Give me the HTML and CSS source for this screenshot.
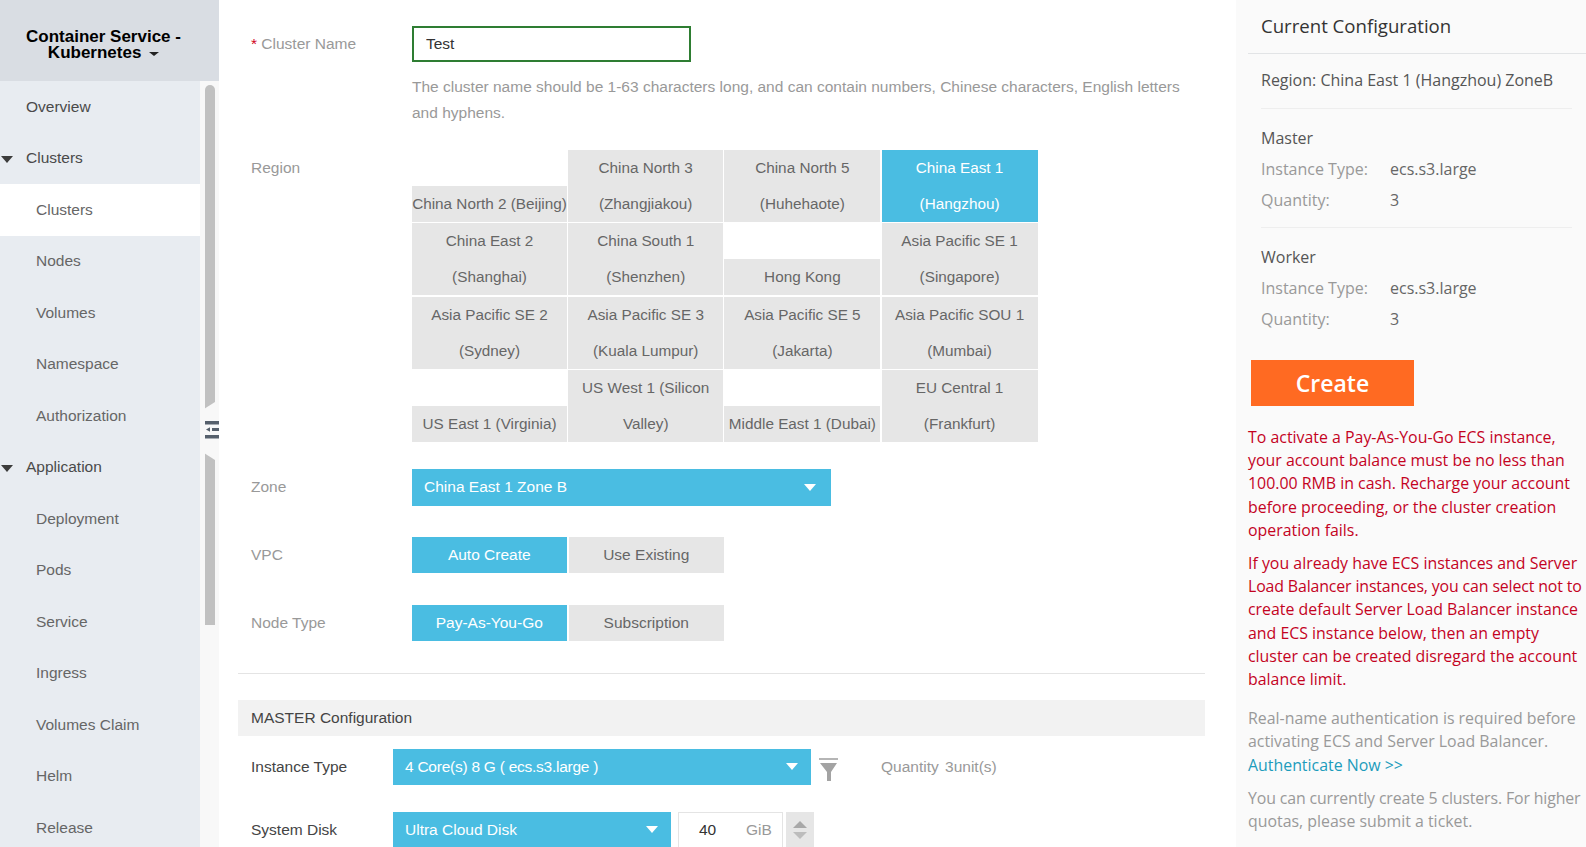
FILE: index.html
```html
<!DOCTYPE html>
<html lang="en">
<head>
<meta charset="utf-8">
<title>Container Service - Kubernetes</title>
<link rel="stylesheet" href="styles.css">
</head>
<body>
<div class="page">
  <aside class="sidebar">
    <div class="brand"><span>Container Service -<br>Kubernetes <i class="brand-caret"></i></span></div>
    <div class="side-body">
      <nav class="menu">
        <a class="item">Overview</a>
        <a class="item group"><i class="tri"></i>Clusters</a>
        <a class="item sub active">Clusters</a>
        <a class="item sub">Nodes</a>
        <a class="item sub">Volumes</a>
        <a class="item sub">Namespace</a>
        <a class="item sub">Authorization</a>
        <a class="item group"><i class="tri"></i>Application</a>
        <a class="item sub">Deployment</a>
        <a class="item sub">Pods</a>
        <a class="item sub">Service</a>
        <a class="item sub">Ingress</a>
        <a class="item sub">Volumes Claim</a>
        <a class="item sub">Helm</a>
        <a class="item sub">Release</a>
      </nav>
      <div class="track"><div class="thumb"></div></div>
    </div>
    <svg class="handle" width="18" height="62" viewBox="0 0 18 62">
      <path d="M3 9 L14 2 H18 V60 H14 L3 53 L2 50 V12 Z" fill="#f8f8f8"/>
      <path d="M4 21h14v3.500H4z M11 28h7v3h-7z M4 35h14v3.500H4z" fill="#56606c"/>
      <path d="M5 29.500l4-2.300v4.600z" fill="#56606c"/>
    </svg>
  </aside>

  <main class="main">
    <div class="form-row name-row">
      <label class="label"><b class="req">*</b> Cluster Name</label>
      <input class="name-input" value="Test">
    </div>
    <p class="help">The cluster name should be 1-63 characters long, and can contain numbers, Chinese characters, English letters<br>and hyphens.</p>

    <div class="form-row region-row">
      <label class="label region-label">Region</label>
      <div class="regions">
        <div class="cell">China North 2 (Beijing)</div>
        <div class="cell">China North 3<br>(Zhangjiakou)</div>
        <div class="cell">China North 5<br>(Huhehaote)</div>
        <div class="cell on">China East 1<br>(Hangzhou)</div>
        <div class="cell">China East 2<br>(Shanghai)</div>
        <div class="cell">China South 1<br>(Shenzhen)</div>
        <div class="cell">Hong Kong</div>
        <div class="cell">Asia Pacific SE 1<br>(Singapore)</div>
        <div class="cell">Asia Pacific SE 2<br>(Sydney)</div>
        <div class="cell">Asia Pacific SE 3<br>(Kuala Lumpur)</div>
        <div class="cell">Asia Pacific SE 5<br>(Jakarta)</div>
        <div class="cell">Asia Pacific SOU 1<br>(Mumbai)</div>
        <div class="cell">US East 1 (Virginia)</div>
        <div class="cell">US West 1 (Silicon<br>Valley)</div>
        <div class="cell">Middle East 1 (Dubai)</div>
        <div class="cell">EU Central 1<br>(Frankfurt)</div>
      </div>
    </div>

    <div class="form-row zone-row">
      <label class="label">Zone</label>
      <div class="select zone-select"><span>China East 1 Zone B</span><i class="caret"></i></div>
    </div>

    <div class="form-row toggle-row">
      <label class="label">VPC</label>
      <div class="toggle"><span class="opt on">Auto Create</span><span class="opt">Use Existing</span></div>
    </div>

    <div class="form-row toggle-row">
      <label class="label">Node Type</label>
      <div class="toggle"><span class="opt on">Pay-As-You-Go</span><span class="opt">Subscription</span></div>
    </div>

    <hr class="divider">

    <div class="section-bar">MASTER Configuration</div>

    <div class="cfg-row first">
      <label class="cfg-label">Instance Type</label>
      <div class="select inst-select"><span>4 Core(s) 8 G ( ecs.s3.large )</span><i class="caret"></i></div>
      <svg class="filter" width="19" height="24" viewBox="0 0 19 24">
        <path d="M0 1h19v2H0z" fill="#b5b5b5"/>
        <path d="M1 6h17l-6 9v9H8v-9z" fill="#a3a3a3"/>
      </svg>
      <span class="quantity">Quantity <span class="qty-num">3unit(s)</span></span>
    </div>

    <div class="cfg-row">
      <label class="cfg-label">System Disk</label>
      <div class="select disk-select"><span>Ultra Cloud Disk</span><i class="caret"></i></div>
      <div class="num-box"><span class="num">40</span><span class="unit">GiB</span></div>
      <div class="stepper"><i class="up"></i><i class="down"></i></div>
    </div>
  </main>

  <section class="panel">
    <h2 class="panel-title">Current Configuration</h2>
    <div class="panel-block region-line">Region: China East 1 (Hangzhou) ZoneB</div>
    <div class="panel-block spec">
      <h3>Master</h3>
      <dl><dt>Instance Type:</dt><dd>ecs.s3.large</dd><dt>Quantity:</dt><dd>3</dd></dl>
    </div>
    <div class="panel-block spec last">
      <h3>Worker</h3>
      <dl><dt>Instance Type:</dt><dd>ecs.s3.large</dd><dt>Quantity:</dt><dd>3</dd></dl>
    </div>
    <button class="create">Create</button>
    <div class="notes">
      <p class="warn">To activate a Pay-As-You-Go ECS instance,<br>your account balance must be no less than<br>100.00 RMB in cash. Recharge your account<br>before proceeding, or the cluster creation<br>operation fails.</p>
      <p class="warn">If you already have ECS instances and Server<br><span class="tight">Load Balancer instances, you can select not to</span><br>create default Server Load Balancer instance<br>and ECS instance below, then an empty<br>cluster can be created disregard the account<br>balance limit.</p>
      <p class="info">Real-name authentication is required before<br>activating ECS and Server Load Balancer.<br><a class="link">Authenticate Now &gt;&gt;</a></p>
      <p class="info"><span class="tight">You can currently create 5 clusters. For higher</span><br>quotas, please submit a ticket.</p>
    </div>
  </section>
</div>
</body>
</html>
```

FILE: styles.css
```css
* { box-sizing: border-box; }
html, body { margin: 0; padding: 0; height: 847px; overflow: hidden; background: #fff; }
body { font-family: "Liberation Sans", Arial, sans-serif; font-size: 15.5px; color: #555; }
.page { display: flex; width: 1586px; height: 847px; overflow: hidden; }

/* sidebar */
.sidebar { position: relative; flex: 0 0 219px; display: flex; flex-direction: column; height: 847px; overflow: hidden; }
.brand { flex: 0 0 81px; background: #d9dde3; display: flex; align-items: center; justify-content: center; text-align: center; color: #000; font-weight: 700; font-size: 17px; line-height: 16px; padding: 8px 12px 0 0; }
.brand-caret { display: inline-block; width: 0; height: 0; border-left: 5px solid transparent; border-right: 5px solid transparent; border-top: 4px solid #222; margin-left: 3px; vertical-align: 2px; }
.side-body { flex: 1; display: flex; min-height: 0; }
.menu { flex: 0 0 200px; background: #e8ecf1; }
.item { display: flex; align-items: center; height: 51.5px; padding-left: 26px; color: #4a4a4a; position: relative; }
.item.sub { padding-left: 36px; color: #666; }
.item.active { background: #fff; }
.tri { position: absolute; left: 1px; top: 23px; width: 0; height: 0; border-left: 6px solid transparent; border-right: 6px solid transparent; border-top: 7px solid #3c3c3c; }
.track { flex: 0 0 19px; background: #f8f8f8; }
.thumb { width: 10px; height: 540px; margin: 4px 0 0 5px; background: #c1c1c1; border-radius: 5px 5px 0 0; }
.handle { position: absolute; left: 201px; top: 400px; }

/* main */
.main { flex: 0 0 1017px; padding: 26px 31px 0 19px; overflow: hidden; height: 847px; }
.form-row { display: flex; align-items: center; padding-left: 13px; }
.label { flex: 0 0 161px; color: #999; }
.req { color: #d0021b; font-weight: 400; }
.name-input { width: 279px; height: 36px; border: 2px solid #2e7d32; border-radius: 0; padding: 0 12px; font: 15.5px "Liberation Sans", Arial, sans-serif; color: #333; outline: none; background: #fff; }
.help { margin: 12px 0 0 174px; color: #999; line-height: 26px; white-space: nowrap; }
.region-row { align-items: flex-start; margin-top: 24px; }
.region-label { padding-top: 9px; }
.regions { display: grid; grid-template-columns: 155px 155px 156px 156px; column-gap: 1.2px; row-gap: 1.33px; align-items: end; }
.cell { background: #e6e6e6; color: #666; text-align: center; font-size: 15.3px; line-height: 36px; white-space: nowrap; }
.cell.on, .opt.on { background: #4abde2; color: #fff; }
.select { display: flex; align-items: center; justify-content: space-between; background: #4abde2; color: #fff; height: 36px; padding: 0 13px 0 12px; }
.caret { display: block; width: 0; height: 0; border-left: 6px solid transparent; border-right: 6px solid transparent; border-top: 7px solid #fff; }
.zone-row { margin-top: 27px; }
.zone-select { width: 419px; height: 37px; padding-right: 15px; }
.toggle-row { margin-top: 32px; }
.zone-row + .toggle-row { margin-top: 31px; }
.toggle { display: flex; gap: 2px; }
.opt { width: 155.5px; height: 36px; line-height: 36px; text-align: center; background: #e6e6e6; color: #666; }
.opt.on { width: 154.5px; }
.divider { border: 0; border-top: 1px solid #e4e4e4; margin: 32px 0 0; }
.section-bar { margin-top: 26px; height: 36px; line-height: 36px; padding-left: 13px; background: #f2f2f2; color: #444; }
.cfg-row { display: flex; align-items: center; margin-top: 27px; padding-left: 13px; height: 36px; }
.cfg-row.first { margin-top: 13px; }
.cfg-label { flex: 0 0 142px; color: #444; }
.inst-select { width: 418px; letter-spacing: -.25px; }
.disk-select { width: 278px; }
.filter { margin-left: 8px; margin-top: 4px; }
.quantity { margin-left: 43px; color: #999; }
.qty-num { margin-left: 2px; }
.num-box { display: flex; align-items: center; width: 105px; height: 36px; margin-left: 7px; border: 1px solid #e4e4e4; }
.num { margin-left: 20px; color: #333; width: 47px; }
.unit { color: #999; }
.stepper { width: 28px; height: 36px; margin-left: 3px; background: #e6e6e6; display: flex; flex-direction: column; align-items: center; justify-content: center; gap: 4px; }
.stepper .up { width: 0; height: 0; border-left: 7px solid transparent; border-right: 7px solid transparent; border-bottom: 7px solid #a8a8a8; }
.stepper .down { width: 0; height: 0; border-left: 7px solid transparent; border-right: 7px solid transparent; border-top: 7px solid #bcbcbc; }

/* right panel */
.panel { flex: 0 0 350px; height: 847px; overflow: hidden; background: #fafafa; font-family: "Open Sans", "Noto Sans", sans-serif; padding-left: 12px; }
.panel-title { margin: 0; height: 54px; padding: 13px 0 0 13px; font-size: 18.6px; line-height: 26px; font-weight: 400; color: #333; border-bottom: 1px solid #e2e4e6; }
.panel-block { margin: 0 14px 0 13px; border-bottom: 1px solid #eee; font-size: 16px; color: #555; }
.region-line { height: 55px; padding-top: 14px; line-height: 24px; }
.spec { height: 119px; padding-top: 17px; }
.spec.last { border-bottom: 0; height: 126px; }
.spec h3 { margin: 0; font-size: 16px; font-weight: 400; line-height: 24px; color: #555; }
.spec dl { margin: 7px 0 0; display: grid; grid-template-columns: 129px 1fr; row-gap: 7px; line-height: 24px; }
.spec dt { color: #999; }
.spec dd { margin: 0; color: #666; }
.create { display: block; width: 163px; height: 46px; margin: 6px 0 0 3px; border: 0; background: #ff6a22; color: #fff; font: 600 23px/46px "Open Sans", sans-serif; padding: 0; }
.notes { margin: 20px 0 0 0; font-size: 15.9px; line-height: 23.2px; white-space: nowrap; }
.notes p { margin: 0 0 10px; }
.tight { letter-spacing: -.14px; }
.warn { color: #c4031f; }
.info { color: #999; }
.warn + .info { margin-top: 16px; }
.link { color: #1c9cbc; }
```
